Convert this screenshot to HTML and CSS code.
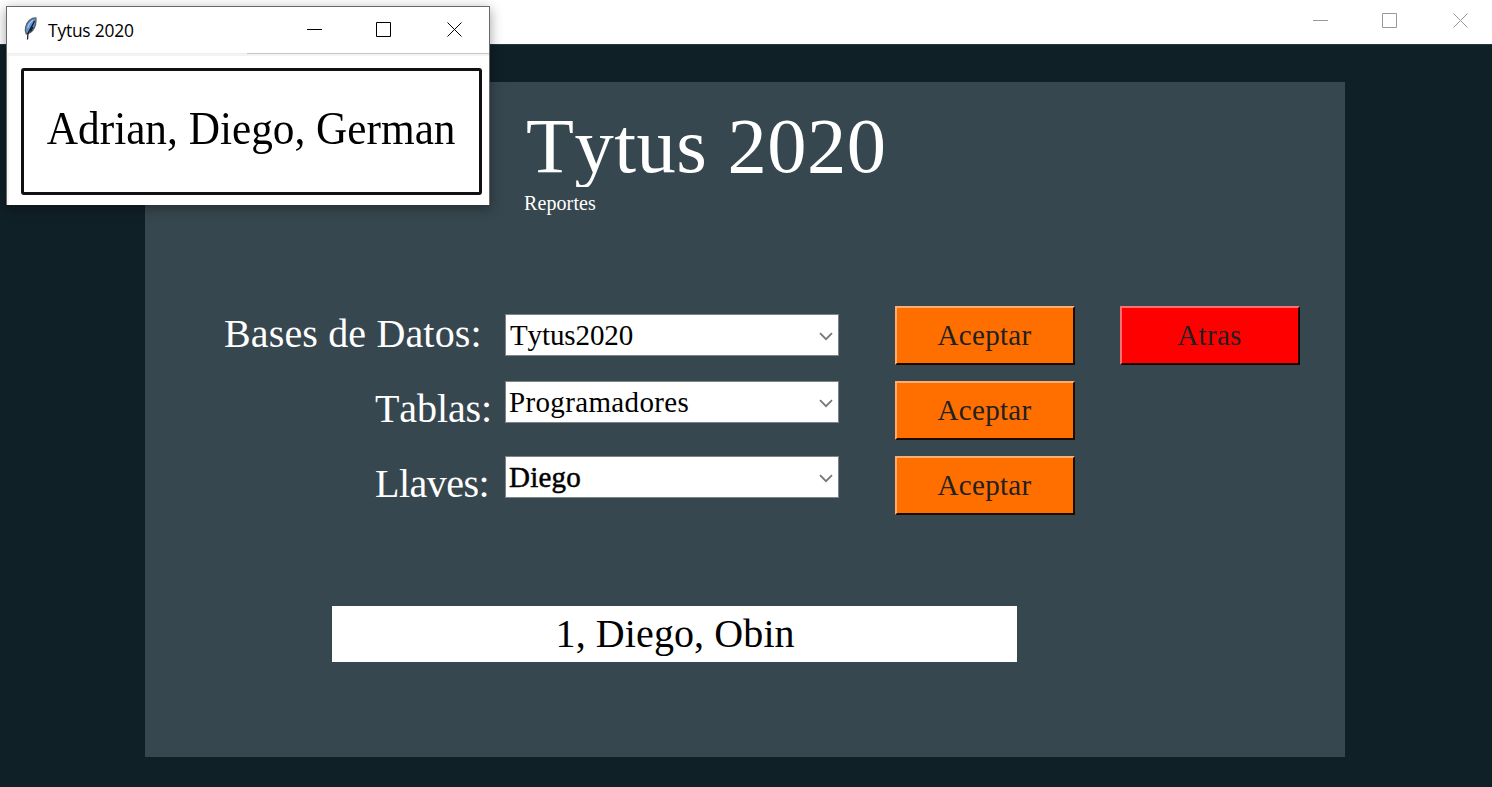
FILE: index.html
```
<!DOCTYPE html>
<html lang="es">
<head>
<meta charset="utf-8">
<title>Tytus 2020</title>
<link rel="stylesheet" href="styles.css">
</head>
<body>
<header class="main-bar">
  <svg class="controls" width="160" height="20" viewBox="0 0 160 20" fill="none" stroke="#999"><path d="M2 9.500h15M71.500 2.500h14v14h-14z"/><path d="M142.500 2.500l14 14M156.500 2.500l-14 14"/></svg>
</header>
<main class="desk">
  <section class="panel">
    <h1 class="title">Tytus 2020</h1>
    <p class="subtitle">Reportes</p>
    <form class="form">
      <div class="row">
        <label class="label label-wide">Bases de Datos:</label>
        <div class="combo combo-first"><span class="value value-first">Tytus2020</span><svg class="chevron" width="14" height="9" viewBox="0 0 14 9"><path d="M1 1.200l6 6 6-6"/></svg></div>
        <button type="button" class="btn">Aceptar</button>
        <button type="button" class="btn btn-back">Atras</button>
      </div>
      <div class="row">
        <label class="label">Tablas:</label>
        <div class="combo"><span class="value value-long">Programadores</span><svg class="chevron" width="14" height="9" viewBox="0 0 14 9"><path d="M1 1.200l6 6 6-6"/></svg></div>
        <button type="button" class="btn">Aceptar</button>
      </div>
      <div class="row">
        <label class="label label-tight">Llaves:</label>
        <div class="combo"><span class="value value-strong">Diego</span><svg class="chevron" width="14" height="9" viewBox="0 0 14 9"><path d="M1 1.200l6 6 6-6"/></svg></div>
        <button type="button" class="btn">Aceptar</button>
      </div>
    </form>
    <div class="result">1, Diego, Obin</div>
  </section>
</main>
<aside class="popup">
  <div class="popup-bar">
    <svg class="feather" width="16" height="26" viewBox="0 0 16 26">
      <path d="M3.300 18C1.300 14 2.500 8 6.500 4.300 9 2.400 11.500 1.800 12.900 2c.5 4-.4 8.500-3.200 12.400C8.300 16.300 6.500 17.600 3.300 18z" fill="#5b93d6" stroke="#5a5f66" stroke-width="1.300"/>
      <path d="M4.500 12C5.500 8.500 7.500 6 10 4.200" fill="none" stroke="#9cc3ee" stroke-width="1.300"/>
      <path d="M11.500 5C10 9 6.500 14 5 17.500L4.500 23.500M10 11L7.500 15.500" fill="none" stroke="#10151c" stroke-width="1.200"/>
    </svg>
    <span class="popup-title">Tytus 2020</span>
    <svg class="controls" width="160" height="20" viewBox="0 0 160 20" fill="none" stroke="#000"><path d="M2 9.500h15M71.500 2.500h14v14h-14z"/><path d="M142.500 2.500l14 14M156.500 2.500l-14 14"/></svg>
  </div>
  <div class="popup-body">
    <div class="record"><span class="record-text">Adrian, Diego, German</span></div>
  </div>
</aside>
</body>
</html>
```

FILE: styles.css
```
* { box-sizing: border-box; }
body {
  margin: 0;
  width: 1492px;
  height: 787px;
  overflow: hidden;
  display: flex;
  flex-direction: column;
  background: #102027;
  font-family: "Liberation Serif", "Times New Roman", serif;
  font-kerning: none;
}
.main-bar {
  height: 44px;
  flex: none;
  display: flex;
  justify-content: flex-end;
  padding: 11px 21px 0 0;
  background: #fff;
}
.controls { display: block; flex: none; }
.desk {
  flex: 1;
  padding: 37px 147px 30px 145px;
  border-top: 1px solid #26363d;
}
.panel {
  width: 1200px;
  height: 675px;
  padding-top: 20px;
  background: #37474f;
  color: #fff;
}
.title {
  margin: 0 0 0 381px;
  height: 85px;
  overflow: hidden;
  font-size: 78.500px;
  font-weight: 400;
  line-height: 88px;
  letter-spacing: .5px;
}
.subtitle {
  margin: 5px 0 0 379px;
  font-size: 20px;
  line-height: 22px;
  letter-spacing: .1px;
}
.form { margin: 84px 0 0; }
.row {
  height: 75px;
  display: grid;
  grid-template-columns: 360px 390px 225px 180px;
  align-items: center;
}
.label {
  padding: 0 0 3px 230px;
  font-size: 40px;
  line-height: 46px;
  letter-spacing: -.1px;
  white-space: nowrap;
}
.label-wide { padding-left: 79px; letter-spacing: .15px; }
.label-tight { letter-spacing: -.5px; }
.combo {
  width: 334px;
  height: 42px;
  margin-bottom: 17px;
  padding: 0 5px 0 3px;
  display: flex;
  align-items: center;
  justify-content: space-between;
  background: #fff;
  border: 1px solid #7d8487;
  color: #000;
}
.combo-first { margin-bottom: 1px; padding-left: 4px; }
.value {
  font-size: 29px;
  line-height: 36px;
}
.value-first { letter-spacing: -.1px; }
.value-long { letter-spacing: .35px; }
.value-strong { letter-spacing: .2px; -webkit-text-stroke: .5px #000; }
.chevron { margin-top: 3px; fill: none; stroke: #777; stroke-width: 1.800; }
.btn {
  width: 180px;
  height: 59px;
  padding: 0 1px 1px 0;
  border: 2px solid;
  border-color: #ffad70 #1c0c00 #1c0c00 #ffad70;
  background: #ff6f00;
  color: #212121;
  font: 29px/34px "Liberation Serif", "Times New Roman", serif;
  letter-spacing: .3px;
}
.btn-back {
  background: #f00;
  border-color: #ff7070 #1c0000 #1c0000 #ff7070;
}
.result {
  width: 684.500px;
  height: 56px;
  margin: 83px 0 0 187.400px;
  padding-left: 1px;
  background: #fff;
  color: #000;
  font-size: 40px;
  line-height: 56px;
  letter-spacing: .1px;
  text-align: center;
}
.popup {
  position: absolute;
  left: 6px;
  top: 6px;
  width: 484px;
  height: 199px;
  display: flex;
  flex-direction: column;
  background: #fff;
  border: 1px solid #696969;
  border-bottom: 0;
  box-shadow: 0 3px 12px rgba(0, 0, 0, .38);
}
.popup-bar {
  height: 47px;
  flex: none;
  display: flex;
  align-items: flex-start;
  padding: 8px 24px 0 16px;
  border-bottom: 1px solid;
  border-image: linear-gradient(90deg, #eee 240px, #c4c4c4 240px) 1;
}
.feather { flex: none; margin-top: 1px; }
.popup-title {
  flex: 1;
  margin: 3px 0 0 9px;
  font-family: "Open Sans", "Noto Sans", sans-serif;
  font-size: 17.400px;
  line-height: 24px;
  letter-spacing: -.2px;
  color: #000;
}
.popup-bar .controls { margin-top: 5px; }
.popup-body {
  flex: 1;
  padding: 12px 7px 8px 12px;
  border-top: 2px solid #f3f3f3;
  border-left: 2px solid #f5f5f7;
}
.record {
  height: 127px;
  display: flex;
  justify-content: center;
  border: 3px solid #111;
  border-radius: 3px;
  filter: blur(.6px);
}
.record-text {
  font-size: 46px;
  line-height: 115px;
  white-space: nowrap;
  color: #000;
  transform: scaleX(.941);
}
```
